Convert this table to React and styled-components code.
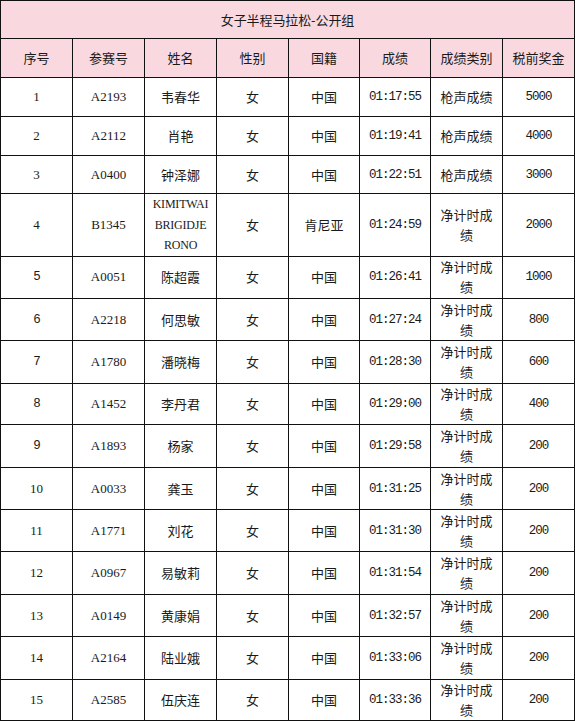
import React from "react";
import styled, { createGlobalStyle, css } from "styled-components";

const GlobalStyle = createGlobalStyle`
  html, body { margin: 0; padding: 0; background: #ffffff; }
  * { box-sizing: border-box; }
`;

const COLS = "72px 72px 72px 72px 71px 71px 72px 72px";
const LINE = "#111111";
const PINK = "#f9d9df";

const Sheet = styled.div`
  width: 575px;
  border-top: 1px solid ${LINE};
  border-left: 1px solid ${LINE};
  color: #1a1a1a;
  font-family: "Noto Sans CJK SC", sans-serif;
`;

const Title = styled.div`
  height: 38px;
  background: ${PINK};
  border-right: 1px solid ${LINE};
  border-bottom: 1px solid ${LINE};
  display: flex;
  align-items: center;
  justify-content: center;
  font-size: 13px;
  letter-spacing: -0.1px;
`;

const Row = styled.div`
  display: grid;
  grid-template-columns: ${COLS};
  height: ${(p) => p.$h}px;
  background: ${(p) => (p.$head ? PINK : "#ffffff")};
`;

const fonts = {
  cjk: css`
    font-family: "Noto Sans CJK SC", sans-serif;
    font-size: 13px;
  `,
  serif: css`
    font-family: "Liberation Serif", "Noto Sans CJK SC", serif;
    font-size: 13px;
  `,
  sans: css`
    font-family: "Liberation Mono", monospace;
    font-size: 12.5px;
    letter-spacing: -1px;
  `,
  name: css`
    font-family: "Liberation Serif", serif;
    font-size: 12px;
    letter-spacing: -0.2px;
    line-height: 20.5px;
  `,
};

const Cell = styled.div`
  border-right: 1px solid ${LINE};
  border-bottom: 1px solid ${LINE};
  display: flex;
  align-items: center;
  justify-content: center;
  text-align: center;
  padding: 0 4px;
  line-height: 20px;
  ${(p) => fonts[p.$font || "cjk"]}
`;

const CellText = styled.span`
  display: block;
  width: 100%;
  word-break: normal;
`;

const headers = ["序号", "参赛号", "姓名", "性别", "国籍", "成绩", "成绩类别", "税前奖金"];

const rows = [
  [1, "A2193", "韦春华", "中国", "01:17:55", "枪声成绩", 5000, 39],
  [2, "A2112", "肖艳", "中国", "01:19:41", "枪声成绩", 4000, 39],
  [3, "A0400", "钟泽娜", "中国", "01:22:51", "枪声成绩", 3000, 38],
  [4, "B1345", "KIMITWAI BRIGIDJE RONO", "肯尼亚", "01:24:59", "净计时成绩", 2000, 62],
  [5, "A0051", "陈超霞", "中国", "01:26:41", "净计时成绩", 1000, 43],
  [6, "A2218", "何思敏", "中国", "01:27:24", "净计时成绩", 800, 42],
  [7, "A1780", "潘晓梅", "中国", "01:28:30", "净计时成绩", 600, 43],
  [8, "A1452", "李丹君", "中国", "01:29:00", "净计时成绩", 400, 41],
  [9, "A1893", "杨家", "中国", "01:29:58", "净计时成绩", 200, 43],
  [10, "A0033", "龚玉", "中国", "01:31:25", "净计时成绩", 200, 42],
  [11, "A1771", "刘花", "中国", "01:31:30", "净计时成绩", 200, 42],
  [12, "A0967", "易敏莉", "中国", "01:31:54", "净计时成绩", 200, 43],
  [13, "A0149", "黄康娟", "中国", "01:32:57", "净计时成绩", 200, 42],
  [14, "A2164", "陆业娥", "中国", "01:33:06", "净计时成绩", 200, 43],
  [15, "A2585", "伍庆连", "中国", "01:33:36", "净计时成绩", 200, 41],
];

export default function App() {
  return (
    <>
      <GlobalStyle />
      <Sheet>
        <Title>女子半程马拉松-公开组</Title>
        <Row $h={39} $head>
          {headers.map((h) => (
            <Cell key={h}>{h}</Cell>
          ))}
        </Row>
        {rows.map(([no, id, name, country, time, kind, prize, h]) => (
          <Row key={no} $h={h}>
            <Cell $font={no >= 5 && no <= 9 ? "sans" : "serif"}>{no}</Cell>
            <Cell $font="serif">{id}</Cell>
            <Cell $font={/^[A-Z ]+$/.test(name) ? "name" : "cjk"}>
              <CellText>{name}</CellText>
            </Cell>
            <Cell>女</Cell>
            <Cell>{country}</Cell>
            <Cell $font="sans">{time}</Cell>
            <Cell>
              <CellText>{kind}</CellText>
            </Cell>
            <Cell $font="sans">{prize}</Cell>
          </Row>
        ))}
      </Sheet>
    </>
  );
}
